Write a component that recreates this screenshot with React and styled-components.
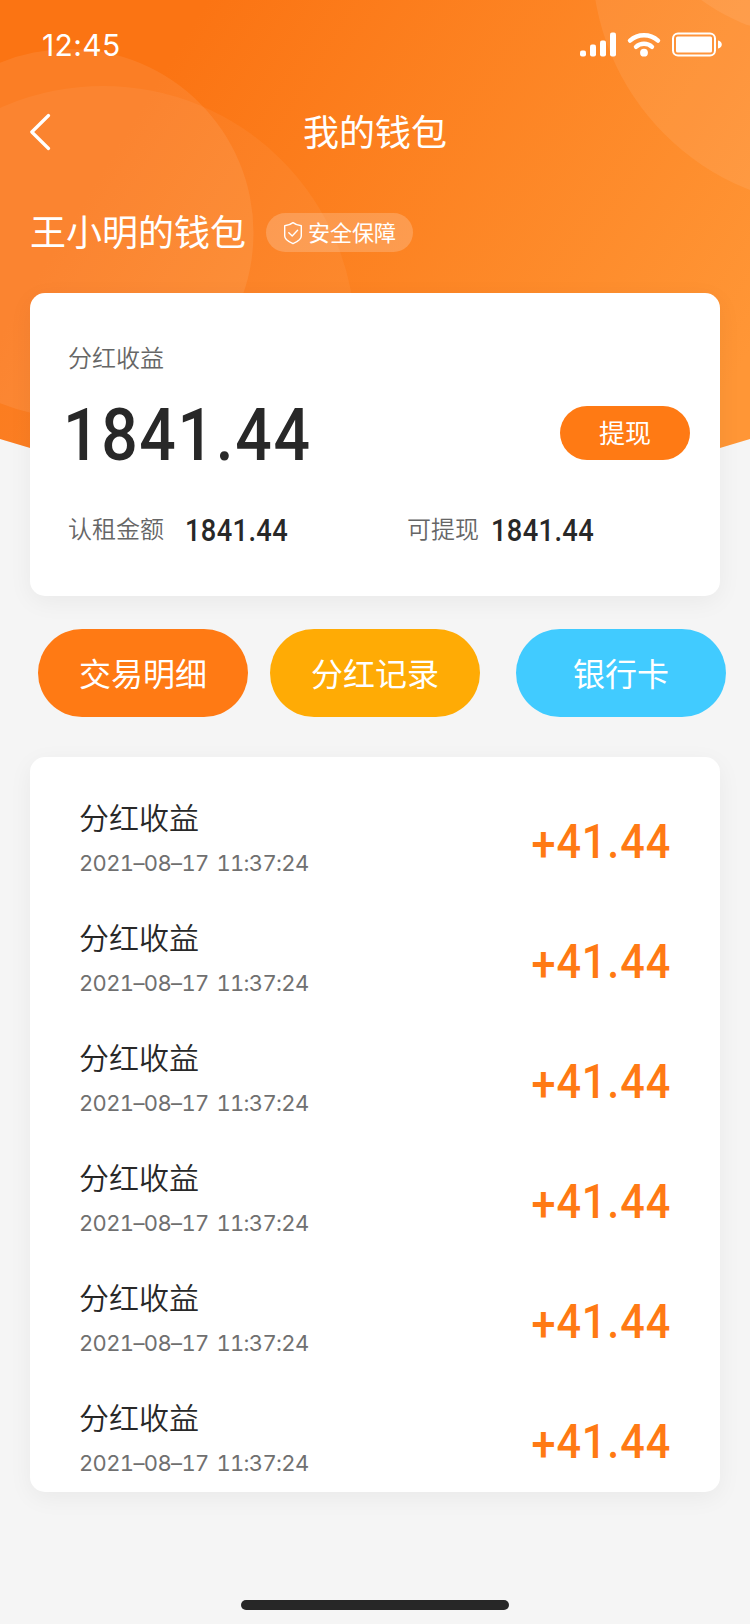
import React from 'react';
import styled, { createGlobalStyle } from 'styled-components';

const GlobalStyle = createGlobalStyle`
  * { box-sizing: border-box; }
  body {
    margin: 0;
    background: #f5f5f5;
    font-family: "Noto Sans CJK SC", sans-serif;
    font-weight: 350;
  }
`;

const Screen = styled.div`
  position: relative;
  width: 750px;
  height: 1624px;
  overflow: hidden;
  display: flex;
  flex-direction: column;
  background: #f5f5f5;
`;

const Backdrop = styled.svg`
  position: absolute;
  top: 0;
  left: 0;
  z-index: 0;
`;

const Content = styled.div`
  position: relative;
  z-index: 1;
  flex: 1;
  display: flex;
  flex-direction: column;
`;

const StatusBar = styled.div`
  height: 88px;
  padding: 2px 28px 0 42px;
  display: flex;
  align-items: center;
  justify-content: space-between;
  color: #fff;
`;

const Time = styled.span`
  font: 400 30px/36px Inter, sans-serif;
  letter-spacing: 0.4px;
`;

const NavBar = styled.header`
  height: 88px;
  padding: 0 30px;
  display: grid;
  grid-template-columns: 60px 1fr 60px;
  align-items: center;
  color: #fff;
`;

const BackButton = styled.button`
  padding: 0;
  border: 0;
  background: none;
  display: flex;
`;

const Title = styled.h1`
  margin: 0 0 4px;
  font-size: 36px;
  line-height: 52px;
  font-weight: 400;
  text-align: center;
`;

const OwnerRow = styled.div`
  height: 117px;
  padding: 0 30px 4px 30px;
  display: flex;
  align-items: center;
  gap: 20px;
  color: #fff;
`;

const OwnerName = styled.h2`
  margin: 0 0 5px;
  font-size: 36px;
  line-height: 52px;
  font-weight: 400;
`;

const SafeBadge = styled.span`
  width: 147px;
  height: 39px;
  padding-left: 17px;
  display: flex;
  align-items: center;
  gap: 5px;
  border-radius: 20px;
  background: rgba(255, 255, 255, 0.2);
  font-size: 22px;
  font-weight: 400;
  line-height: 37px;
`;

const BadgeText = styled.span`
  padding-bottom: 2px;
`;

const Card = styled.section`
  margin: 0 30px;
  border-radius: 15px;
  background: #fff;
  box-shadow: 0 6px 24px rgba(0, 0, 0, 0.05);
`;

const BalanceCard = styled(Card)`
  height: 303px;
  padding: 46px 30px 0 38px;
`;

const Label = styled.span`
  font-size: 24px;
  line-height: 36px;
  color: #666;
`;

const Figure = styled.span`
  display: block;
  font-family: Roboto, sans-serif;
  font-weight: 500;
  font-size: ${(p) => p.$size}px;
  line-height: 1;
  letter-spacing: ${(p) => p.$track || 0}px;
  color: ${(p) => p.$color || '#282828'};
  transform: scaleX(${(p) => p.$narrow || 0.88});
  transform-origin: ${(p) => p.$origin || 'left'} center;
`;

const Sign = styled.span`
  vertical-align: -3px;
  line-height: 0;
`;

const BalanceRow = styled.div`
  height: 115px;
  margin-left: -5px;
  display: flex;
  align-items: center;
  justify-content: space-between;
`;

const BalanceFigure = styled(Figure)`
  padding-top: 6px;
`;

const WithdrawButton = styled.button`
  width: 130px;
  height: 54px;
  padding: 0 0 2px;
  border: 0;
  border-radius: 27px;
  background: #ff7a14;
  color: #fff;
  font: 400 26px/52px "Noto Sans CJK SC", sans-serif;
`;

const SummaryRow = styled.div`
  margin-top: 20px;
  display: grid;
  grid-template-columns: 339px 1fr;
`;

const SummaryItem = styled.div`
  display: flex;
  align-items: center;
  gap: ${(p) => p.$gap}px;
`;

const SummaryFigure = styled(Figure)`
  padding-top: 4px;
`;

const Actions = styled.nav`
  margin: 33px 24px 40px 38px;
  display: flex;
`;

const ActionButton = styled.button`
  width: 210px;
  height: 88px;
  margin-left: ${(p) => p.$before || 0}px;
  padding: 0 0 2px;
  border: 0;
  border-radius: 44px;
  background: ${(p) => p.$color};
  color: #fff;
  font: 400 32px/86px "Noto Sans CJK SC", sans-serif;
`;

const RecordCard = styled(Card)`
  height: 735px;
  padding-top: 25px;
`;

const Record = styled.div`
  height: 120px;
  padding: 0 49px;
  display: flex;
  align-items: center;
  justify-content: space-between;
`;

const RecordText = styled.div`
  padding-bottom: 13px;
  display: flex;
  flex-direction: column;
  gap: 10px;
`;

const RecordTitle = styled.span`
  font-size: 30px;
  line-height: 44px;
  color: #282828;
`;

const RecordDate = styled.span`
  font: 400 22px/30px Inter, sans-serif;
  font-variant-numeric: tabular-nums;
  letter-spacing: -0.65px;
  word-spacing: 2.5px;
  color: #707070;
`;

const HomeIndicator = styled.div`
  width: 268px;
  height: 10px;
  margin: auto auto 14px;
  border-radius: 5px;
  background: #272727;
`;

const HeaderBackdrop = () => (
  <Backdrop width="750" height="500" viewBox="0 0 750 500">
    <defs>
      <linearGradient id="glow" gradientUnits="userSpaceOnUse" x1="170" y1="60" x2="720" y2="400">
        <stop offset="0" stopColor="#fb7413" />
        <stop offset="1" stopColor="#ff9636" />
      </linearGradient>
      <clipPath id="arc">
        <path d="M0 0H750V439Q375 556 0 439Z" />
      </clipPath>
    </defs>
    <g clipPath="url(#arc)">
      <rect width="750" height="500" fill="url(#glow)" />
      <g fill="#fff" fillOpacity="0.08">
        <circle cx="69.5" cy="233" r="184" />
        <circle cx="103" cy="338.500" r="252.5" fillOpacity="0.05" />
        <circle cx="840" cy="-41" r="248" />
        <circle cx="810" cy="-146" r="182" />
      </g>
    </g>
  </Backdrop>
);

const StatusIcons = () => (
  <svg width="143" height="26" viewBox="0 0 143 26" fill="none">
    <g fill="#fff">
      <rect x="1" y="18.5" width="6" height="6" rx="2" />
      <rect x="11" y="12.5" width="6" height="12" rx="2" />
      <rect x="21" y="8.5" width="6" height="16" rx="2" />
      <rect x="31" y="0.5" width="6" height="24" rx="2" />
      <circle cx="65" cy="20.7" r="3.9" />
      <rect x="97" y="4.5" width="36" height="16" rx="1.5" />
      <path d="M139 8.5C144 9 144 16 139 16.5Z" />
    </g>
    <g stroke="#fff" strokeWidth="4.4" strokeLinecap="round">
      <path d="M51 8.6A21 21 0 0 1 79 8.6" />
      <path d="M57 14.8A12 12 0 0 1 73 14.8" />
    </g>
    <rect x="94" y="1.5" width="42" height="22" rx="5" stroke="#fff" strokeWidth="2" />
  </svg>
);

const BackIcon = () => (
  <svg width="22" height="38" viewBox="0 0 22 38" fill="none">
    <path d="M18.5 2.5L1.8 19L18.5 35.5" stroke="#fff" strokeWidth="3.2" strokeLinecap="round" strokeLinejoin="round" />
  </svg>
);

const ShieldIcon = () => (
  <svg width="20" height="24" viewBox="0 0 20 24" fill="none" stroke="#fff" strokeWidth="1.4" strokeLinecap="round" strokeLinejoin="round">
    <path d="M10 1.6C7.5 3.6 5 4.4 1.7 4.7V15C1.7 18.5 6 21 10 22.7C14 21 18.3 18.5 18.3 15V4.7C15 4.4 12.5 3.6 10 1.6Z" />
    <path d="M5.8 11.8L9.2 15L14.6 9.2" />
  </svg>
);

const records = Array.from({ length: 6 }, (_, id) => ({
  id,
  title: '分红收益',
  date: '2021–08–17 11:37:24',
  amount: '41.44',
}));

export default function App() {
  return (
    <Screen>
      <GlobalStyle />
      <HeaderBackdrop />
      <Content>
        <StatusBar>
          <Time>12:45</Time>
          <StatusIcons />
        </StatusBar>
        <NavBar>
          <BackButton aria-label="返回"><BackIcon /></BackButton>
          <Title>我的钱包</Title>
        </NavBar>
        <OwnerRow>
          <OwnerName>王小明的钱包</OwnerName>
          <SafeBadge><ShieldIcon /><BadgeText>安全保障</BadgeText></SafeBadge>
        </OwnerRow>
        <BalanceCard>
          <Label>分红收益</Label>
          <BalanceRow>
            <BalanceFigure $size={73} $track={1.9}>1841.44</BalanceFigure>
            <WithdrawButton>提现</WithdrawButton>
          </BalanceRow>
          <SummaryRow>
            <SummaryItem $gap={21}>
              <Label>认租金额</Label>
              <SummaryFigure $size={31} $track={0.4}>1841.44</SummaryFigure>
            </SummaryItem>
            <SummaryItem $gap={12}>
              <Label>可提现</Label>
              <SummaryFigure $size={31} $track={0.4}>1841.44</SummaryFigure>
            </SummaryItem>
          </SummaryRow>
        </BalanceCard>
        <Actions>
          <ActionButton $color="#ff7a14">交易明细</ActionButton>
          <ActionButton $color="#ffab05" $before={22}>分红记录</ActionButton>
          <ActionButton $color="#41cbff" $before={36}>银行卡</ActionButton>
        </Actions>
        <RecordCard>
          {records.map((r) => (
            <Record key={r.id}>
              <RecordText>
                <RecordTitle>{r.title}</RecordTitle>
                <RecordDate>{r.date}</RecordDate>
              </RecordText>
              <Figure $size={48} $track={1} $narrow={0.9} $color="#ff7a14" $origin="right"><Sign>+</Sign>{r.amount}</Figure>
            </Record>
          ))}
        </RecordCard>
        <HomeIndicator />
      </Content>
    </Screen>
  );
}
